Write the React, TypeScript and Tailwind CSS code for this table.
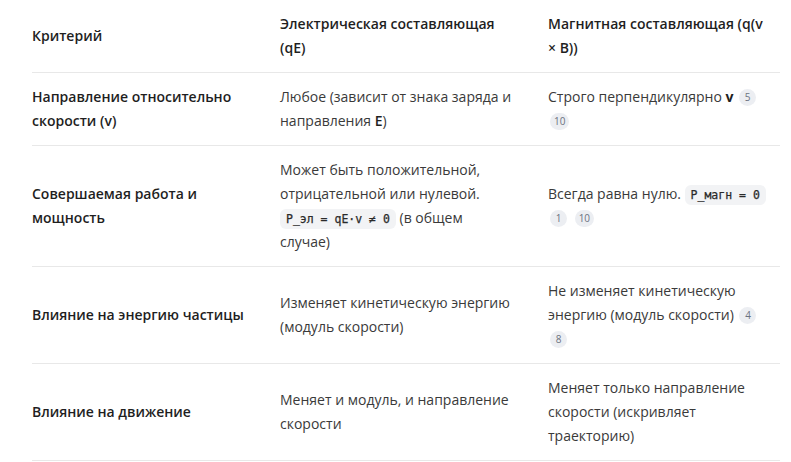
import React from "react";

function Cite({ n }: { n: string }) {
  return (
    <span className="mx-[2px] inline-flex h-[17px] min-w-[17px] items-center justify-center rounded-full bg-[#eceef2] px-[4px] align-[1px] text-[10px] leading-none text-[#6b7280]">
      {n}
    </span>
  );
}

function Code({ children }: { children: React.ReactNode }) {
  return (
    <code className="whitespace-nowrap rounded-md bg-[#f2f3f5] px-[6px] py-[3px] font-['DejaVu_Sans_Mono',monospace] text-[11.5px] leading-[14px] text-[#2a2a2a] [-webkit-text-stroke:0.25px_#2a2a2a]">
      {children}
    </code>
  );
}

const ROWS: { c: React.ReactNode; e: React.ReactNode; m: React.ReactNode }[] = [
  {
    c: "Направление относительно скорости (v)",
    e: (
      <>
        Любое (зависит от знака заряда и направления <b className="font-semibold text-[#1f1f1f]">E</b>)
      </>
    ),
    m: (
      <>
        Строго перпендикулярно <b className="font-bold text-[#1f1f1f]">v</b> <Cite n="5" /> <Cite n="10" />
      </>
    ),
  },
  {
    c: "Совершаемая работа и мощность",
    e: (
      <>
        Может быть положительной, отрицательной или нулевой. <Code>P_эл = qE·v ≠ 0</Code> (в общем случае)
      </>
    ),
    m: (
      <>
        Всегда равна нулю. <Code>P_магн = 0</Code> <Cite n="1" /> <Cite n="10" />
      </>
    ),
  },
  {
    c: "Влияние на энергию частицы",
    e: "Изменяет кинетическую энергию (модуль скорости)",
    m: (
      <>
        Не изменяет кинетическую энергию (модуль скорости) <Cite n="4" /> <Cite n="8" />
      </>
    ),
  },
  {
    c: "Влияние на движение",
    e: "Меняет и модуль, и направление скорости",
    m: "Меняет только направление скорости (искривляет траекторию)",
  },
];

export default function App() {
  return (
    <div className="min-h-screen bg-white pl-[32px] pr-[11px] font-['Open_Sans',sans-serif] text-[14px] leading-[24px] text-[#3a3a3a]">
      <table className="w-full table-fixed border-collapse">
        <colgroup>
          <col className="w-[248px]" />
          <col className="w-[268px]" />
          <col />
        </colgroup>
        <thead>
          <tr className="border-b border-[#e8e8e8]">
            <th className="py-3 pr-4 text-left align-middle font-semibold text-[#1f1f1f]">Критерий</th>
            <th className="py-3 pr-[32px] text-left align-middle font-semibold text-[#1f1f1f]">
              Электрическая составляющая (qE)
            </th>
            <th className="py-3 pr-2 text-left align-middle font-semibold text-[#1f1f1f]">
              Магнитная составляющая (q(v × B))
            </th>
          </tr>
        </thead>
        <tbody>
          {ROWS.map((r, i) => (
            <tr key={i} className="border-b border-[#e8e8e8]">
              <td className="py-3 pr-4 align-middle font-semibold text-[#1f1f1f]">{r.c}</td>
              <td className="py-3 pr-[32px] align-middle">{r.e}</td>
              <td className="py-3 pr-2 align-middle">{r.m}</td>
            </tr>
          ))}
        </tbody>
      </table>
    </div>
  );
}
